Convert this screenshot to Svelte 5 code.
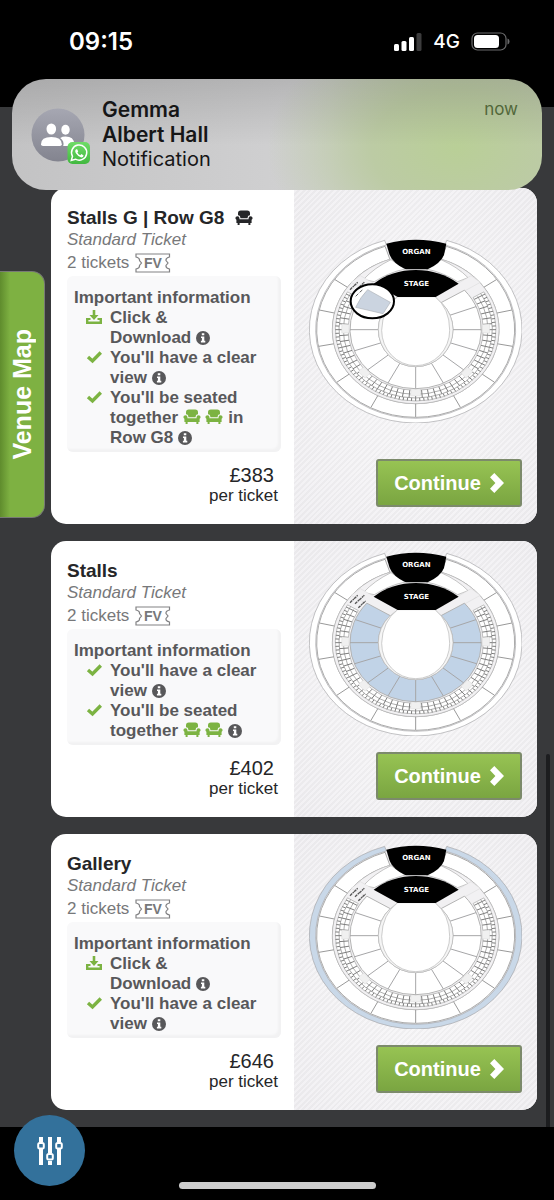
<script>
  const tickets = [
    {
      title: 'Stalls G | Row G8',
      seatIcon: true,
      price: '£383',
      highlight: 'block',
      perks: [
        { icon: 'download', text: 'Click &', last: 'Download' },
        { icon: 'check', text: "You'll have a clear", last: 'view' },
        { icon: 'check', text: "You'll be seated", seats: 'together', after: 'in', last: 'Row G8' }
      ]
    },
    {
      title: 'Stalls',
      price: '£402',
      highlight: 'stalls',
      perks: [
        { icon: 'check', text: "You'll have a clear", last: 'view' },
        { icon: 'check', text: "You'll be seated", seats: 'together', last: '' }
      ]
    },
    {
      title: 'Gallery',
      price: '£646',
      highlight: 'gallery',
      perks: [
        { icon: 'download', text: 'Click &', last: 'Download' },
        { icon: 'check', text: "You'll have a clear", last: 'view' }
      ]
    }
  ];

  // Seating plan geometry: concentric ellipses around one centre.
  const CX = 362;
  const CY = 316;

  function pt(rx, ry, deg) {
    const a = (deg * Math.PI) / 180;
    return `${(CX + rx * Math.cos(a)).toFixed(1)} ${(CY + ry * Math.sin(a)).toFixed(1)}`;
  }

  function arc(rx, ry, from, to) {
    const sweep = to > from ? 1 : 0;
    const large = Math.abs(to - from) > 180 ? 1 : 0;
    return `A${rx} ${ry} 0 ${large} ${sweep} ${pt(rx, ry, to)}`;
  }

  function band(rx1, ry1, rx2, ry2, from, to, from2 = from, to2 = to) {
    return `M${pt(rx1, ry1, from)}${arc(rx1, ry1, from, to)}L${pt(rx2, ry2, to2)}${arc(rx2, ry2, to2, from2)}Z`;
  }

  function spokes(rx1, ry1, rx2, ry2, angles) {
    return angles.map((a) => `M${pt(rx1, ry1, a)}L${pt(rx2, ry2, a)}`).join('');
  }

  function range(from, to, step) {
    const out = [];
    for (let a = from; a <= to; a += step) out.push(a);
    return out;
  }

  const gallery = band(319, 280, 300, 266, -73, 253);
  const circle = band(297, 263, 250, 222, -72, 252);
  const boxes = band(241, 214, 203, 182, -32, 212);
  const stalls = band(197, 177, 112, 111, -42, 222, -47, 227);
  const circleSpokes = spokes(296, 262, 250, 222, [-35, -13, 11, 37, 63, 90, 117, 143, 169, 193, 215]);
  const stallSpokes = spokes(197, 177, 112, 111, [-23, 0, 21, 43, 65, 90, 115, 137, 159, 180, 203]);
  const boxRows =
    `M${pt(230, 205, -32)}${arc(230, 205, -32, 212)}` + `M${pt(217, 194, -31)}${arc(217, 194, -31, 211)}`;
  const boxSpokes =
    spokes(241, 214, 230, 205, range(-30, 210, 3)) +
    spokes(230, 205, 203, 182, range(-30, 210, 5));
  const landings = [-1, 43, 90, 137, 181].map((a) => band(222, 199, 200, 178, a - 4, a + 4));
</script>

{#snippet seat(color)}
  <svg class="seat" viewBox="0 0 18 16" fill={color} aria-hidden="true">
    <path d="M3 5.2V3.4Q3 .6 5.8.6h6.4Q15 .6 15 3.4v1.8Q12.6 5.4 12.6 8.2H5.4Q5.4 5.4 3 5.2Z" />
    <path d="M2.5 6.2Q4.5 6.2 4.5 8.4V9.2h9V8.4q0-2.2 2-2.2T17.6 8q0 1-1 1.7V13H15.4v2h-2V13H4.6v2h-2V13H1.4V9.7Q.4 9 .4 8q0-1.8 2.1-1.8Z" />
  </svg>
{/snippet}

{#snippet info()}
  <svg class="info" viewBox="0 0 14 14" role="img" aria-label="More information">
    <circle cx="7" cy="7" r="7" fill="#58585a" />
    <path d="M5.8 2.2h2.5v2.1H5.8zM5 5.5h3.3v4.3h1v1.6H4.9V9.8h1V7.1H5z" fill="#fff" />
  </svg>
{/snippet}

{#snippet venue(highlight)}
  <svg class="venue" viewBox="42 44 639 552" role="img" aria-label="Seating plan">
    <path d={gallery} fill={highlight === 'gallery' ? '#c9d8e8' : '#fff'} stroke="#a5a5a7" stroke-width="2" />
    <path d={circle} fill="#fff" stroke="#aaa" stroke-width="3" />
    <ellipse cx="362" cy="316" rx="250" ry="222" fill="#f2f1f3" stroke="#b5b5b5" stroke-width="2" />
    <path d="M205 166Q238 130 288 106L330 134Q282 144 238 172ZM519 160Q488 128 438 106L394 134Q444 144 488 172Z" fill="#fff" stroke="#aaa" stroke-width="2" />
    <path d="M196 154L308 217L285 237L168 174ZM528 154L422 217L441 237L556 174Z" fill="#f1f0f2" stroke="#ccc" stroke-width="1" />
    <path d={circleSpokes} fill="none" stroke="#999" stroke-width="3" />
    <path d={boxes} fill="#fff" stroke="#a3a3a3" stroke-width="2" />
    <path d={boxRows} fill="none" stroke="#858585" stroke-width="2" />
    <path d={boxSpokes} fill="none" stroke="#7d7d7d" stroke-width="3" />
    {#each landings as d}
      <path {d} fill="#f0f0f0" stroke="#ccc" stroke-width="1" />
    {/each}
    <path d={stalls} fill={highlight === 'stalls' ? '#c1d3e7' : '#fff'} stroke="#b3b3b3" stroke-width="3" />
    <path d={stallSpokes} fill="none" stroke="#a6a6a8" stroke-width="3" />
    <ellipse cx="362" cy="316" rx="112" ry="111" fill="#f5f5f5" stroke="#bbb" stroke-width="2" />
    <path d="M308 217H420Q464 252 464 318A102 106 0 0 1 260 318Q262 252 308 217Z" fill="#fff" stroke="#b5b5b5" stroke-width="2" />
    <path d="M165 196L188 174M180 199L208 174M190 211L212 191" stroke="#555" stroke-width="4" stroke-dasharray="9 2 5 1" fill="none" />
    <path d="M274 58Q362 34 454 58L447 92Q436 118 398 135H332Q295 118 284 92Z" fill="#000" />
    <path d="M236 178Q290 137 362 137Q435 137 491 178L422 218H308Z" fill="#000" />
    <text x="364" y="90">ORGAN</text>
    <text x="364" y="186">STAGE</text>
    {#if highlight === 'block'}
      <ellipse cx="232" cy="231" rx="65" ry="51" fill="#fff" />
      <path d="M218 196L286 234L264 268L182 249Q196 218 218 196Z" fill="#cbd4e0" stroke="#aeb2b8" stroke-width="2" />
      <path d="M182 216l8-8m4-4l8-7" stroke="#666" stroke-width="3" />
      <ellipse cx="232" cy="231" rx="65" ry="51" fill="none" stroke="#000" stroke-width="6" />
    {/if}
  </svg>
{/snippet}

<div class="page">
  <header class="status">
    <time>09:15</time>
    <div class="signals">
      <svg class="bars" viewBox="0 0 28 18" aria-hidden="true">
        <rect x="0" y="11" width="5" height="7" rx="1.5" fill="#fff" />
        <rect x="7.5" y="8" width="5" height="10" rx="1.5" fill="#fff" />
        <rect x="15" y="4" width="5" height="14" rx="1.5" fill="#fff" />
        <rect x="22.5" y="0" width="5" height="18" rx="1.5" fill="#3c3c3d" />
      </svg>
      <span>4G</span>
      <svg class="battery" viewBox="0 0 39 19" aria-hidden="true">
        <rect x="1" y="1" width="34" height="17" rx="5.5" fill="none" stroke="#6b6b6c" stroke-width="1.2" />
        <rect x="3" y="3" width="25" height="13" rx="3.5" fill="#fff" />
        <path d="M36.5 6.5q2 .6 2 3t-2 3z" fill="#6b6b6c" />
      </svg>
    </div>
  </header>

  <section class="notice">
    <svg class="avatar" viewBox="0 0 60 56" aria-hidden="true">
      <defs>
        <linearGradient id="av" x1="0" y1="0" x2="0" y2="1">
          <stop offset="0" stop-color="#a6a7b2" /><stop offset="1" stop-color="#83848f" />
        </linearGradient>
        <linearGradient id="wa" x1="0" y1="0" x2="0" y2="1">
          <stop offset="0" stop-color="#6fdc68" /><stop offset="1" stop-color="#41b83f" />
        </linearGradient>
      </defs>
      <circle cx="27" cy="27" r="26.5" fill="url(#av)" />
      <g fill="#fff">
        <ellipse cx="20.3" cy="21" rx="4.8" ry="5.6" />
        <path d="M10 36.2Q10 29 20.3 29T30.8 36.2Q30.8 38 29 38H12Q10 38 10 36.2Z" />
        <ellipse cx="34.5" cy="21.8" rx="4.2" ry="5" />
        <path d="M32.2 38q1.4-5-3-8 2.2-1.4 5.3-1.4 8.5 0 8.5 7.2 0 2.2-2 2.2Z" />
      </g>
      <rect x="36.5" y="34" width="22.5" height="22" rx="5" fill="url(#wa)" />
      <path d="M40.3 52.4l1.2-4.100a7.600 7.600 0 1 1 2.900 2.900Z" fill="none" stroke="#fff" stroke-width="1.5" />
      <path d="M45.2 41.3q-1.900 1.500-.1 4.200 2.300 3.500 5.200 3.900 2 0 2.300-2l-2.200-1.300-1.100 1.200q-2-.8-2.900-2.800l.8-1-1-2.200Z" fill="#fff" />
    </svg>
    <div class="message">
      <strong>Gemma</strong>
      <strong>Albert Hall</strong>
      <span>Notification</span>
    </div>
    <span class="when">now</span>
  </section>

  <button class="map-tab" type="button"><span>Venue Map</span></button>

  <main>
    {#each tickets as t}
      <article class="card">
        <div class="details">
          <h2>{t.title}{#if t.seatIcon}&nbsp; {@render seat('#252628')}{/if}</h2>
          <p class="kind">Standard Ticket</p>
          <p class="count">
            2 tickets
            <svg class="fv" viewBox="0 0 36 20" role="img" aria-label="Face value">
              <path d="M1 1H34.5V4Q30.5 5 31 7.5L33 10L31 12.5Q30.5 15 34.5 16V19H1V16Q5 15 4.500 12.500L6.500 10L4.500 7.500Q5 5 1 4Z" fill="none" stroke="#828284" stroke-width="1.2" />
              <text x="18" y="15">FV</text>
            </svg>
          </p>
          <div class="notes">
            <h3>Important information</h3>
            <ul>
              {#each t.perks as p}
                <li>
                  {#if p.icon === 'download'}
                    <svg class="bullet" viewBox="0 0 16 16" fill="none" stroke="#7cb342" stroke-width="2.4" aria-hidden="true">
                      <path d="M1.2 9v4.7H14.8V9" /><path d="M0 10H4.5M11.5 10H16" stroke-width="2" />
                      <path d="M6.7 1h2.600v5h3.200L8 11 3.500 6h3.200z" fill="#7cb342" stroke="none" />
                    </svg>
                  {:else}
                    <svg class="bullet" viewBox="0 0 16 16" fill="none" stroke="#7cb342" stroke-width="3.400" aria-hidden="true">
                      <path d="M2 8L6.500 12L14.800 3.500" />
                    </svg>
                  {/if}
                  <span>
                    {p.text}
                    {#if p.seats}<span class="keep">{p.seats} {@render seat('#7cb342')} {@render seat('#7cb342')}{#if p.after}{' '}{p.after}{/if}</span>{/if}
                    <span class="keep">{p.last}{#if p.last}&nbsp;{/if}{@render info()}</span>
                  </span>
                </li>
              {/each}
            </ul>
          </div>
          <p class="price">{t.price}</p>
          <p class="per">per ticket</p>
        </div>
        <div class="plan">
          {@render venue(t.highlight)}
          <button class="continue" type="button">
            Continue
            <svg viewBox="0 0 14 20" aria-hidden="true"><path d="M0 4.3L4.3 0L14 10L4.3 20L0 15.7L5.4 10Z" fill="#fff" /></svg>
          </button>
        </div>
      </article>
    {/each}
    <div class="scroll"></div>
  </main>

  <footer>
    <button class="filters" type="button" aria-label="Filters">
      <svg viewBox="0 0 26 30" fill="none" stroke="#fff" aria-hidden="true">
        <path d="M4 1V6M4 13V29M13 1V17M13 25V29M22 1V6M22 13V29" stroke-width="4" />
        <rect x="1.2" y="7" width="5.6" height="5.6" rx="1.5" stroke-width="2" />
        <rect x="10.2" y="18" width="5.6" height="5.6" rx="1.5" stroke-width="2" />
        <rect x="19.2" y="7" width="5.6" height="5.6" rx="1.5" stroke-width="2" />
      </svg>
    </button>
    <div class="home"></div>
  </footer>
</div>

<style>
  :global(body) {
    margin: 0;
    background: #000;
  }
  .page {
    position: relative;
    min-height: 100vh;
    display: flex;
    flex-direction: column;
    background: #38393b;
    font-family: 'Liberation Sans', Arial, sans-serif;
    color: #252628;
  }
  .page * {
    box-sizing: border-box;
  }
  h2, h3, p, ul {
    margin: 0;
    padding: 0;
  }
  button {
    font-family: inherit;
    cursor: pointer;
    padding: 0;
    border: 0;
  }

  .status {
    display: flex;
    justify-content: space-between;
    align-items: flex-start;
    height: 107px;
    padding: 28px 44px 0 69px;
    background: #000;
    color: #fff;
    font-family: Inter, sans-serif;
  }
  .status time {
    font-size: 24px;
    line-height: 28px;
    font-weight: 600;
  }
  .signals {
    display: flex;
    align-items: center;
    gap: 11px;
    height: 27px;
    font-size: 19px;
    font-weight: 500;
  }
  .bars {
    width: 28px;
    height: 18px;
  }
  .battery {
    width: 39px;
    height: 19px;
  }

  .notice {
    position: absolute;
    z-index: 3;
    top: 79px;
    left: 12px;
    right: 12px;
    display: flex;
    align-items: flex-start;
    gap: 10px;
    padding: 18px 24px 18px 19px;
    border-radius: 34px;
    background:
      linear-gradient(180deg, rgba(0, 0, 0, 0.13), rgba(0, 0, 0, 0) 60%),
      radial-gradient(ellipse 190px 130px at 84% 62%, #b9cf97 0%, #bccba4 45%, rgba(206, 209, 203, 0) 100%),
      linear-gradient(90deg, #c3c3c4, #d2d2d3 60%, #c3c9b8);
    font-family: Inter, sans-serif;
    color: #161617;
  }
  .avatar {
    width: 60px;
    height: 56px;
    margin-top: 11px;
    flex: none;
  }
  .message {
    display: flex;
    flex-direction: column;
    flex: 1;
    margin-left: 1px;
    font-size: 20px;
    line-height: 25px;
  }
  .message strong {
    font-size: 21px;
    font-weight: 600;
  }
  .when {
    font-size: 17px;
    line-height: 25px;
    color: #52673a;
  }

  .map-tab {
    position: absolute;
    z-index: 2;
    left: 0;
    top: 271px;
    width: 45px;
    height: 247px;
    border: 1px solid #777a75;
    border-left: 0;
    border-radius: 0 13px 13px 0;
    background: linear-gradient(90deg, #5f8c2d, #7eb142 10px);
    color: #fff;
    font-size: 25px;
    font-weight: bold;
    line-height: 44px;
  }
  .map-tab span {
    display: block;
    writing-mode: vertical-rl;
    transform: rotate(180deg);
    width: 44px;
    margin: auto;
  }

  main {
    position: relative;
    flex: 1;
    display: flex;
    flex-direction: column;
    gap: 17px;
    padding: 81px 17px 17px 51px;
  }
  .card {
    display: grid;
    grid-template-columns: 1fr 1fr;
    border-radius: 15px;
    overflow: hidden;
    background: #fff;
  }
  .details {
    padding: 19px 13px 18px 16px;
    font-size: 17px;
    line-height: 20px;
  }
  h2 {
    font-size: 19px;
    line-height: 22px;
    white-space: nowrap;
  }
  .kind {
    line-height: 22px;
    font-style: italic;
    color: #77787a;
  }
  .count {
    display: flex;
    align-items: center;
    gap: 6px;
    line-height: 24px;
    color: #77787a;
  }
  .fv {
    width: 36px;
    height: 20px;
  }
  .fv text {
    font: bold 14px 'Liberation Sans', sans-serif;
    text-anchor: middle;
    fill: #77787a;
  }
  .notes {
    margin-top: 1px;
    padding: 12px 10px 4px 7px;
    border-radius: 6px;
    background: #f9f9fa;
    box-shadow: inset -3px -3px 2px #f2f2f3;
    color: #58585a;
    font-weight: bold;
  }
  h3 {
    font-size: 17px;
    line-height: 20px;
  }
  ul {
    list-style: none;
  }
  li {
    display: grid;
    grid-template-columns: 16px 1fr;
    gap: 8px;
    padding-left: 12px;
  }
  .bullet {
    width: 16px;
    height: 16px;
    margin-top: 1px;
  }
  .keep {
    white-space: nowrap;
  }
  .seat {
    width: 18px;
    height: 16px;
    vertical-align: -2px;
  }
  .info {
    width: 14px;
    height: 14px;
    vertical-align: -2px;
  }
  .price {
    margin-top: 12px;
    padding-right: 7px;
    font-size: 20px;
    line-height: 22px;
    text-align: right;
  }
  .per {
    padding-right: 3px;
    text-align: right;
  }

  .plan {
    display: flex;
    flex-direction: column;
    align-items: center;
    padding: 11px 15px 17px;
    background:
      radial-gradient(ellipse at center, rgba(255, 255, 255, 0.4), rgba(232, 230, 235, 0.3) 100%),
      repeating-linear-gradient(135deg, #ebeaec 0 2px, #f6f5f7 2px 4px);
  }
  .plan::before {
    content: '';
    flex: 2;
  }
  .plan::after {
    content: '';
    order: 1;
    flex: 1;
  }
  .venue {
    width: 100%;
    max-width: 320px;
    margin-bottom: 16px;
  }
  .venue text {
    font: bold 21px 'DejaVu Sans', sans-serif;
    text-anchor: middle;
    fill: #fff;
  }
  .continue {
    order: 2;
    align-self: flex-end;
    display: flex;
    align-items: center;
    justify-content: center;
    gap: 9px;
    width: 146px;
    height: 48px;
    border: 2px solid #7c8a6b;
    border-radius: 3px;
    background: linear-gradient(180deg, #97c353, #7aa541);
    color: #fff;
    font-size: 20px;
    font-weight: bold;
  }
  .continue svg {
    width: 14px;
    height: 20px;
  }
  .scroll {
    position: absolute;
    right: 4px;
    bottom: 0;
    width: 4px;
    height: 373px;
    border-radius: 2px 2px 0 0;
    background: #1c1d1f;
  }

  footer {
    position: relative;
    display: flex;
    justify-content: center;
    height: 73px;
    padding-top: 55px;
    background: #000;
  }
  .filters {
    position: absolute;
    left: 14px;
    top: -12px;
    width: 71px;
    height: 71px;
    display: grid;
    place-items: center;
    border-radius: 50%;
    background: #33719b;
  }
  .filters svg {
    width: 26px;
    height: 30px;
  }
  .home {
    width: 197px;
    height: 7px;
    border-radius: 4px;
    background: #cdcdcd;
  }
</style>
